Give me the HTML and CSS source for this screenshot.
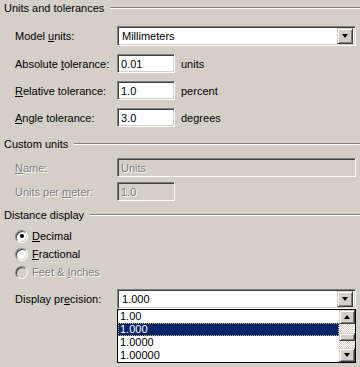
FILE: index.html
```html
<!DOCTYPE html>
<html>
<head>
<meta charset="utf-8">
<link rel="stylesheet" href="styles.css">
</head>
<body>
<div class="dlg">
  <div class="group-head">Units and tolerances</div>
  <div class="form form-units">
    <label class="lbl">Model <u>u</u>nits:</label>
    <div class="combo"><span class="val">Millimeters</span><span class="drop"><span class="arrow"></span></span></div>
    <label class="lbl">Absolute <u>t</u>olerance:</label>
    <div class="fieldline"><div class="tb">0.01</div><span>units</span></div>
    <label class="lbl"><u>R</u>elative tolerance:</label>
    <div class="fieldline"><div class="tb">1.0</div><span>percent</span></div>
    <label class="lbl"><u>A</u>ngle tolerance:</label>
    <div class="fieldline"><div class="tb">3.0</div><span>degrees</span></div>
  </div>

  <div class="group-head head-custom">Custom units</div>
  <div class="form form-custom">
    <label class="lbl dis"><u>N</u>ame:</label>
    <div class="tb wide dis">Units</div>
    <label class="lbl dis">Units per <u>m</u>eter:</label>
    <div class="tb dis">1.0</div>
  </div>

  <div class="group-head head-dist">Distance display</div>
  <div class="radios">
    <div class="radio-row"><span class="radio checked"></span><span><u>D</u>ecimal</span></div>
    <div class="radio-row"><span class="radio"></span><span><u>F</u>ractional</span></div>
    <div class="radio-row dis"><span class="radio dis"></span><span class="dis">Feet &amp; <u>I</u>nches</span></div>
  </div>

  <div class="form form-prec">
    <label class="lbl">Display pr<u>e</u>cision:</label>
    <div class="combo-wrap">
      <div class="combo"><span class="val">1.000</span><span class="drop"><span class="arrow"></span></span></div>
      <div class="listbox">
        <div class="items">
          <div class="item">1.00</div>
          <div class="item sel">1.000</div>
          <div class="item">1.0000</div>
          <div class="item">1.00000</div>
        </div>
        <div class="vscroll">
          <span class="sbtn"><span class="arrow up"></span></span>
          <span class="track"><span class="thumb"></span></span>
          <span class="sbtn"><span class="arrow"></span></span>
        </div>
      </div>
    </div>
  </div>
</div>
</body>
</html>
```

FILE: styles.css
```css
* { box-sizing: border-box; }
html, body { margin: 0; padding: 0; }
body {
  width: 360px;
  height: 367px;
  overflow: hidden;
  background: #d4d0c8;
  font-family: "Liberation Sans", Arial, sans-serif;
  font-size: 11px;
  color: #000;
}
u { text-decoration: underline; text-underline-offset: 1px; }

.dlg { display: flex; flex-direction: column; }

.group-head {
  display: flex;
  align-items: center;
  height: 16px;
  padding-left: 4px;
  white-space: nowrap;
}
.group-head::after {
  content: "";
  flex: 1;
  height: 0;
  margin-left: 6px;
  border-top: 1px solid #808080;
  border-bottom: 1px solid #fff;
}
.head-custom { margin-top: 9px; }
.head-dist { margin-top: 6px; }

.form {
  display: grid;
  grid-template-columns: 102px 1fr;
  align-items: center;
  padding-left: 15px;
  padding-right: 4px;
}
.form-units { margin-top: 10px; row-gap: 8px; }
.form-custom { margin-top: 6px; row-gap: 5px; }
.form-prec { margin-top: 8px; }

.lbl { white-space: nowrap; }
.dis { color: #808080; text-shadow: 1px 1px 0 #fff; }

.sunken {
}
.tb, .combo {
  background: #fff;
  border: 1px solid;
  border-color: #808080 #fff #fff #808080;
  box-shadow: inset 1px 1px 0 #404040, inset -1px -1px 0 #d4d0c8;
}
.tb {
  width: 58px;
  height: 19px;
  padding: 2px 0 0 3px;
  line-height: 14px;
}
.tb.wide { width: 239px; }
.tb.dis { background: #d4d0c8; }

.fieldline { display: flex; align-items: center; gap: 6px; }

.combo {
  display: flex;
  align-items: center;
  height: 20px;
  padding: 2px;
  width: 239px;
}
.combo .val { flex: 1; padding-left: 2px; }
.drop, .sbtn {
  display: flex;
  align-items: center;
  justify-content: center;
  width: 16px;
  height: 16px;
  background: #d4d0c8;
  border: 1px solid;
  border-color: #d4d0c8 #404040 #404040 #d4d0c8;
  box-shadow: inset 1px 1px 0 #fff, inset -1px -1px 0 #808080;
}
.arrow {
  width: 0;
  height: 0;
  border-left: 3.5px solid transparent;
  border-right: 3.5px solid transparent;
  border-top: 4px solid #000;
}
.arrow.up { border-top: 0; border-bottom: 4px solid #000; }

.radios { display: flex; flex-direction: column; padding-left: 15px; margin-top: 4px; }
.radio-row { display: flex; align-items: center; gap: 4px; height: 18px; }
.radio {
  width: 13px;
  height: 13px;
  border-radius: 50%;
  background: #fff;
  border: 1px solid;
  border-color: #808080 #fff #fff #808080;
  box-shadow: inset 1px 1px 0 #404040, inset -1px -1px 0 #d4d0c8;
  display: flex;
  align-items: center;
  justify-content: center;
}
.radio.checked::after {
  content: "";
  width: 4px;
  height: 4px;
  border-radius: 50%;
  background: #000;
}
.radio.dis { background: #d4d0c8; }

.combo-wrap { position: relative; width: 239px; }
.listbox {
  position: absolute;
  top: 100%;
  left: 0;
  width: 239px;
  height: 54px;
  background: #fff;
  border: 1px solid #000;
  display: flex;
}
.items { flex: 1; display: flex; flex-direction: column; }
.item { height: 13px; line-height: 13px; padding-left: 2px; }
.item.sel {
  background: #0a246a;
  color: #fff;
  outline: 1px dotted #c8b874;
  outline-offset: -1px;
}
.vscroll { width: 16px; display: flex; flex-direction: column; }
.vscroll .sbtn { height: 14px; }
.track {
  flex: 1;
  position: relative;
  background: repeating-conic-gradient(#fff 0 25%, #d4d0c8 0 50%);
  background-size: 2px 2px;
  display: flex;
  flex-direction: column;
  padding-top: 9px;
}
.thumb {
  height: 8px;
  background: #d4d0c8;
  border: 1px solid;
  border-color: #d4d0c8 #404040 #404040 #d4d0c8;
  box-shadow: inset 1px 1px 0 #fff, inset -1px -1px 0 #808080;
}
```
